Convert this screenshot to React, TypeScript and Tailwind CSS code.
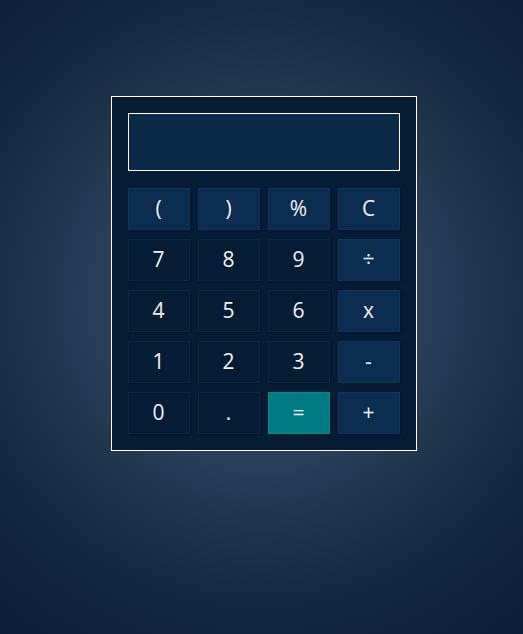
import React, { useState } from 'react';

type Key = { label: string; kind: 'op' | 'num' | 'eq' };

const keys: Key[] = [
  { label: '(', kind: 'op' },
  { label: ')', kind: 'op' },
  { label: '%', kind: 'op' },
  { label: 'C', kind: 'op' },
  { label: '7', kind: 'num' },
  { label: '8', kind: 'num' },
  { label: '9', kind: 'num' },
  { label: '÷', kind: 'op' },
  { label: '4', kind: 'num' },
  { label: '5', kind: 'num' },
  { label: '6', kind: 'num' },
  { label: 'x', kind: 'op' },
  { label: '1', kind: 'num' },
  { label: '2', kind: 'num' },
  { label: '3', kind: 'num' },
  { label: '-', kind: 'op' },
  { label: '0', kind: 'num' },
  { label: '.', kind: 'num' },
  { label: '=', kind: 'eq' },
  { label: '+', kind: 'op' },
];

const styles = {
  op: 'bg-[#0b2d50] border-[#0e3659] hover:bg-[#0e3861]',
  num: 'bg-[#041c34] border-[#0a2641] hover:bg-[#07243f]',
  eq: 'bg-[#007a82] border-[#008a92] hover:bg-[#008891]',
};

const App: React.FC = () => {
  const [value, setValue] = useState('');

  const press = (k: string) => {
    if (k === 'C') return setValue('');
    if (k === '=') {
      try {
        const expr = value.replace(/x/g, '*').replace(/÷/g, '/').replace(/%/g, '/100');
        // eslint-disable-next-line no-new-func
        setValue(String(Function(`return (${expr})`)()));
      } catch {
        setValue('Error');
      }
      return;
    }
    setValue(value + k);
  };

  return (
    <div className="min-h-[634px] bg-[radial-gradient(circle_at_50%_47%,#2e465d_0%,#263e57_40%,#152b44_68%,#0b1e36_100%)] flex justify-center pl-1 pt-[96px] font-['Open_Sans',sans-serif]">
      <div className="w-[306px] h-[355px] border border-white bg-[#041d35] p-4">
        <div className="h-[58px] border border-white bg-[#0a2a48] text-right text-white text-2xl px-3 flex items-center justify-end overflow-hidden">
          {value}
        </div>
        <div className="grid grid-cols-4 gap-x-2 gap-y-[9px] mt-[17px]">
          {keys.map((k) => (
            <button
              key={k.label}
              onClick={() => press(k.label)}
              className={`h-[42px] border text-[21px] text-[#f2f2f2] shadow-[1px_1px_2px_rgba(0,0,0,0.35)] flex items-center justify-center ${styles[k.kind]}`}
            >
              {k.label}
            </button>
          ))}
        </div>
      </div>
    </div>
  );
};

export default App;
